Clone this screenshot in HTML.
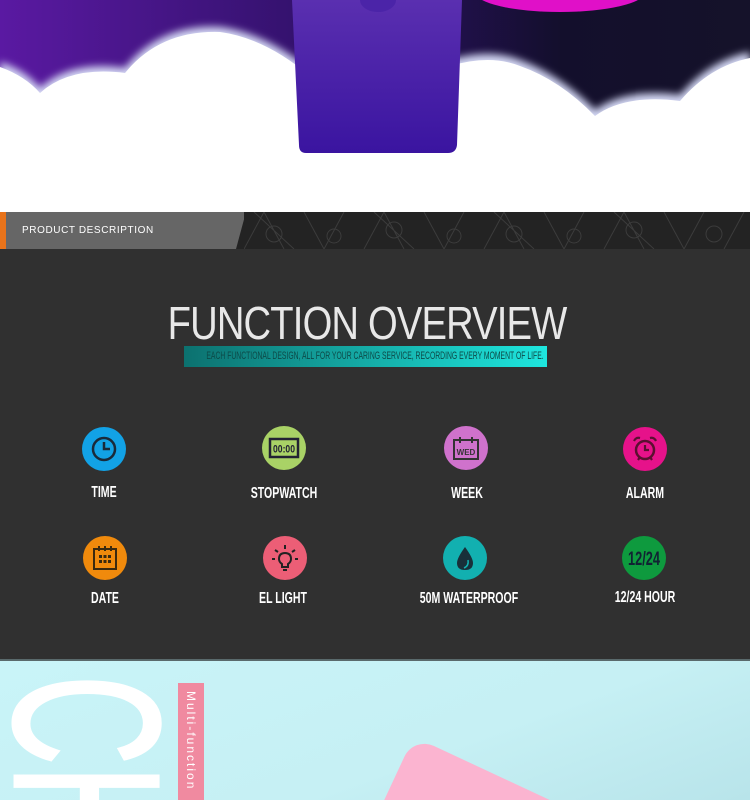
<!DOCTYPE html>
<html><head><meta charset="utf-8"><style>
*{margin:0;padding:0;box-sizing:border-box}
html,body{width:750px;height:800px;overflow:hidden}
body{background:#fff;font-family:"Liberation Sans",sans-serif;position:relative}
.abs{position:absolute}
.lbl{position:absolute;width:160px;left:0;text-align:center;color:#fff;font-size:16px;font-weight:bold;margin-left:-80px;transform:scaleX(0.66)}
.ic{position:absolute;width:44px;height:44px;border-radius:50%;margin:-22px 0 0 -22px}
</style></head><body>
<svg class="abs" style="left:0;top:0" width="750" height="212">
<defs>
<linearGradient id="bg" x1="0" x2="1"><stop offset="0" stop-color="#5a19a2"/><stop offset="0.5" stop-color="#2a1060"/><stop offset="0.75" stop-color="#130f2c"/><stop offset="1" stop-color="#15122a"/></linearGradient>
<linearGradient id="band" x1="0" y1="0" x2="0" y2="1"><stop offset="0" stop-color="#5a2fb0"/><stop offset="1" stop-color="#3a14a0"/></linearGradient>
<filter id="bl"><feGaussianBlur stdDeviation="4"/></filter>
</defs>
<rect width="750" height="212" fill="url(#bg)"/>
<ellipse cx="560" cy="-8" rx="85" ry="20" fill="#e010c8"/>
<ellipse cx="555" cy="-14" rx="70" ry="14" fill="#1a1030"/>
<path d="M0 62 Q25 70 40 88 Q70 60 125 68 Q160 24 220 27 Q265 33 310 70 L310 212 L0 212Z" fill="#d4d8f4" filter="url(#bl)"/>
<path d="M450 60 Q490 48 520 60 Q560 75 595 110 Q625 88 680 95 Q710 60 750 52 L750 212 L450 212Z" fill="#d4d8f4" filter="url(#bl)"/>
<path d="M0 67 Q25 76 40 93 Q70 66 125 73 Q160 30 220 32 Q265 38 310 76 L310 212 L0 212Z" fill="#fff"/>
<path d="M450 66 Q490 54 520 66 Q560 80 595 116 Q625 94 680 101 Q710 66 750 58 L750 212 L450 212Z" fill="#fff"/>
<rect x="300" y="110" width="160" height="102" fill="#fff"/>
<path d="M292 0 L462 0 L457 145 Q456 153 448 153 L306 153 Q299 153 299 145Z" fill="url(#band)"/>
<ellipse cx="378" cy="0" rx="18" ry="12" fill="#4b24a8"/>
</svg>
<div class="abs" style="left:0;top:212px;width:750px;height:37px;background:#232323"></div>
<svg class="abs" style="left:244px;top:212px" width="506" height="37"><g stroke="#3c3c3c" fill="none" stroke-width="1"><path d="M0 37 L20 0 L40 37 M60 0 L80 37 L100 0 M120 37 L140 0 L160 37 M180 0 L200 37 L220 0 M240 37 L260 0 L280 37 M300 0 L320 37 L340 0 M360 37 L380 0 L400 37 M420 0 L440 37 L460 0 M480 37 L500 0 M10 0 L50 37 M130 0 L170 37 M250 0 L290 37 M370 0 L410 37"/><circle cx="30" cy="22" r="8"/><circle cx="90" cy="24" r="7"/><circle cx="150" cy="18" r="8"/><circle cx="210" cy="24" r="7"/><circle cx="270" cy="22" r="8"/><circle cx="330" cy="24" r="7"/><circle cx="390" cy="18" r="8"/><circle cx="470" cy="22" r="8"/></g></svg>
<div class="abs" style="left:0;top:212px;width:244px;height:37px;background:#666;clip-path:polygon(0 0,100% 0,100% 20%,236px 100%,0 100%)"></div>
<div class="abs" style="left:0;top:212px;width:6px;height:37px;background:#e8731a"></div>
<div class="abs" style="left:22px;top:225px;color:#fff;font-size:10px;letter-spacing:0.6px">PRODUCT DESCRIPTION</div>
<div class="abs" style="left:0;top:249px;width:750px;height:411px;background:#303030"></div>
<div class="abs" style="left:0;top:659px;width:750px;height:2px;background:#5a6a6c"></div>
<div class="abs" style="left:-8px;top:296px;width:750px;text-align:center;color:#e8e8e8;font-size:46px;letter-spacing:-1px;transform:scaleX(0.83)">FUNCTION OVERVIEW</div>
<div class="abs" style="left:184px;top:346px;width:363px;height:21px;background:linear-gradient(90deg,#0c716f,#1ee6de)"></div>
<div class="abs" style="left:0;top:346px;width:750px;height:21px;color:#0d4a48;font-size:11px;line-height:21px;text-align:center;white-space:nowrap;transform:scaleX(0.62)">EACH FUNCTIONAL DESIGN, ALL FOR YOUR CARING SERVICE, RECORDING EVERY MOMENT OF LIFE.</div>

<div class="ic" style="left:104px;top:449px;background:#12a2e6"></div>
<svg class="abs" style="left:90px;top:435px" width="28" height="28"><circle cx="14" cy="14" r="11" fill="none" stroke="#1a2a3a" stroke-width="2.5"/><path d="M14 7 V14 H20" fill="none" stroke="#1a2a3a" stroke-width="2.5"/></svg>
<div class="ic" style="left:284px;top:448px;background:#a9d266"></div>
<svg class="abs" style="left:268px;top:437px" width="32" height="22"><rect x="2" y="2" width="28" height="18" fill="none" stroke="#223" stroke-width="2.5"/><text x="16" y="15.5" font-size="11" text-anchor="middle" fill="#223" font-family="Liberation Sans" font-weight="bold" textLength="22" lengthAdjust="spacingAndGlyphs">00:00</text></svg>
<div class="ic" style="left:466px;top:448px;background:#cf72cc"></div>
<svg class="abs" style="left:452px;top:435px" width="28" height="26"><rect x="2" y="5" width="24" height="19" fill="none" stroke="#333" stroke-width="2"/><path d="M8 2V8M20 2V8" stroke="#333" stroke-width="2"/><text x="14" y="20" font-size="8" text-anchor="middle" font-weight="bold" fill="#333">WED</text></svg>
<div class="ic" style="left:645px;top:449px;background:#e6128a"></div>
<svg class="abs" style="left:631px;top:435px" width="28" height="28"><circle cx="14" cy="15" r="9" fill="none" stroke="#5a1030" stroke-width="2.5"/><path d="M14 10V15H18M3 6 Q5 2 9 3M25 6Q23 2 19 3M7 25L9 22M21 25L19 22" fill="none" stroke="#5a1030" stroke-width="2.2"/></svg>
<div class="lbl" style="left:104px;top:484px">TIME</div>
<div class="lbl" style="left:284px;top:485px">STOPWATCH</div>
<div class="lbl" style="left:467px;top:485px">WEEK</div>
<div class="lbl" style="left:645px;top:485px">ALARM</div>

<div class="ic" style="left:105px;top:558px;background:#f08a0c"></div>
<svg class="abs" style="left:91px;top:544px" width="28" height="28"><rect x="3" y="5" width="22" height="20" fill="none" stroke="#3a2a10" stroke-width="2"/><path d="M8 2V7M14 2V7M20 2V7" stroke="#3a2a10" stroke-width="2"/><g fill="#3a2a10"><rect x="8" y="11" width="3" height="3"/><rect x="12.5" y="11" width="3" height="3"/><rect x="17" y="11" width="3" height="3"/><rect x="8" y="16" width="3" height="3"/><rect x="12.5" y="16" width="3" height="3"/><rect x="17" y="16" width="3" height="3"/></g></svg>
<div class="ic" style="left:285px;top:558px;background:#ec5e76"></div>
<svg class="abs" style="left:271px;top:544px" width="28" height="28"><path d="M14 9 Q20 9 20 15 Q20 18 17 20 V23 H11 V20 Q8 18 8 15 Q8 9 14 9Z" fill="none" stroke="#222" stroke-width="2"/><path d="M12 26H16M14 1V5M4 6L7 8M24 6L21 8M1 15H4M24 15H27" stroke="#222" stroke-width="2"/></svg>
<div class="ic" style="left:465px;top:558px;background:#12b0b0"></div>
<svg class="abs" style="left:451px;top:544px" width="28" height="28"><path d="M14 3 Q22 14 22 19 Q22 26 14 26 Q6 26 6 19 Q6 14 14 3Z" fill="#18303a"/><path d="M17 16 Q18 22 13 24" stroke="#12b0b0" stroke-width="1.5" fill="none"/></svg>
<div class="ic" style="left:644px;top:558px;background:#0e9a3e"></div>
<svg class="abs" style="left:622px;top:544px" width="44" height="28"><text x="22" y="21" font-size="19" font-weight="bold" text-anchor="middle" fill="#123" font-family="Liberation Sans" textLength="32" lengthAdjust="spacingAndGlyphs">12/24</text></svg>
<div class="lbl" style="left:105px;top:590px">DATE</div>
<div class="lbl" style="left:283px;top:590px">EL LIGHT</div>
<div class="lbl" style="left:469px;top:590px">50M WATERPROOF</div>
<div class="lbl" style="left:645px;top:589px">12/24 HOUR</div>

<div class="abs" style="left:0;top:661px;width:750px;height:139px;overflow:hidden;background:linear-gradient(160deg,#c9f4f8 0%,#c6f0f4 60%,#b8e4ea 100%)">
<div class="abs" style="left:380px;top:108px;width:180px;height:120px;background:#fbb4d0;border-radius:22px;transform:rotate(25deg)"></div>
<svg class="abs" style="left:0;top:0" width="750" height="139"><text transform="translate(15,14) rotate(90) scale(0.6,1)" font-size="208" fill="#fff" stroke="#fff" stroke-width="3" font-family="Liberation Sans">CH</text></svg>
<div class="abs" style="left:178px;top:22px;width:26px;height:117px;background:#f08aa0"></div>
<div class="abs" style="left:184px;top:30px;color:#fff;font-size:12px;letter-spacing:2px;writing-mode:vertical-rl;white-space:nowrap">Multi-function</div>
</div>
</body></html>
